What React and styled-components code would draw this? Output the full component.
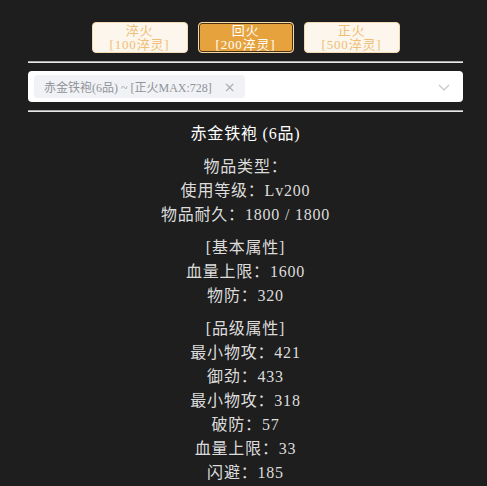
import React, { useState } from 'react';
import styled, { createGlobalStyle } from 'styled-components';

const FONT = `"Liberation Serif", "Noto Sans CJK SC", serif`;

const GlobalStyle = createGlobalStyle`
	html, body {
		margin : 0;
		padding : 0;
		background : #1e1e1e;
	}
	body {
		font-family : ${FONT};
	}
`

const fires = [
	{ name : '淬火', cost : '[100淬灵]' },
	{ name : '回火', cost : '[200淬灵]' },
	{ name : '正火', cost : '[500淬灵]' },
];

const sections = [
	['物品类型：', '使用等级：Lv200', '物品耐久：1800 / 1800'],
	['[基本属性]', '血量上限：1600', '物防：320'],
	['[品级属性]', '最小物攻：421', '御劲：433', '最小物攻：318', '破防：57', '血量上限：33', '闪避：185'],
];

const App = () => {
	const [active, setActive] = useState(1);

	return (
		<Page>
			<GlobalStyle />
			<FireBar>
				{fires.map((f, i) =>
					<FireButton key={f.name} $active={i === active} onClick={() => setActive(i)}>
						{f.name}<br />{f.cost}
					</FireButton>
				)}
			</FireBar>
			<Rule />
			<Select>
				<Tag>
					赤金铁袍(6品) ~ [正火MAX:728]
					<TagClose>×</TagClose>
				</Tag>
				<Chevron width="14" height="14" viewBox="0 0 14 14">
					<path d="M2 5 L7 10 L12 5" fill="none" stroke="#c0c4cc" strokeWidth="1.2" />
				</Chevron>
			</Select>
			<Rule />
			<Title>赤金铁袍 (6品)</Title>
			{sections.map((lines, i) =>
				<Section key={i}>
					{lines.map((l, j) => <Line key={j}>{l}</Line>)}
				</Section>
			)}
		</Page>
	);
};

const Page = styled.div`
	padding : 22px 24px 20px 28px;
	color : #dcdcdc;
`

const FireBar = styled.div`
	display : flex;
	justify-content : center;
	gap : 10px;
`

const FireButton = styled.button`
	width : 96px;
	height : 31px;
	padding : 0;
	font-family : ${FONT};
	font-size : 13px;
	line-height : 14px;
	letter-spacing : 0.8px;
	border-radius : 4px;
	cursor : pointer;
	background : ${p => p.$active ? '#e6a23c' : '#fdf6ec'};
	color : ${p => p.$active ? '#fff' : '#eebe77'};
	border : 1px solid ${p => p.$active ? '#f7d9a8' : '#f5dab1'};
	box-shadow : ${p => p.$active ? 'inset 0 0 0 1px #4a3210' : 'none'};
`

const Rule = styled.div`
	margin-top : 8px;
	height : 0;
	border-top : 1px solid #a8a8a8;
	border-bottom : 1px solid #e8e8e8;
`

const Select = styled.div`
	margin-top : 8px;
	height : 31px;
	background : #fff;
	border-radius : 4px;
	display : flex;
	align-items : center;
	padding : 0 12px 0 6px;
`

const Tag = styled.span`
	display : inline-flex;
	align-items : center;
	height : 23px;
	padding : 0 9px 0 10px;
	background : #f0f2f5;
	border-radius : 4px;
	color : #909399;
	font-size : 12px;
	white-space : nowrap;
`

const TagClose = styled.span`
	margin-left : 12px;
	font-family : "DejaVu Sans", sans-serif;
	font-size : 14px;
	color : #a8abb2;
`

const Chevron = styled.svg`
	margin-left : auto;
`

const Title = styled.div`
	margin-top : 10px;
	text-align : center;
	font-size : 16px;
	line-height : 24px;
	letter-spacing : 0.8px;
	color : #fff;
`

const Section = styled.div`
	margin-top : 9px;
	text-align : center;
	font-size : 16px;
	line-height : 24px;
	letter-spacing : 0.8px;
`

const Line = styled.div``

export default App;
